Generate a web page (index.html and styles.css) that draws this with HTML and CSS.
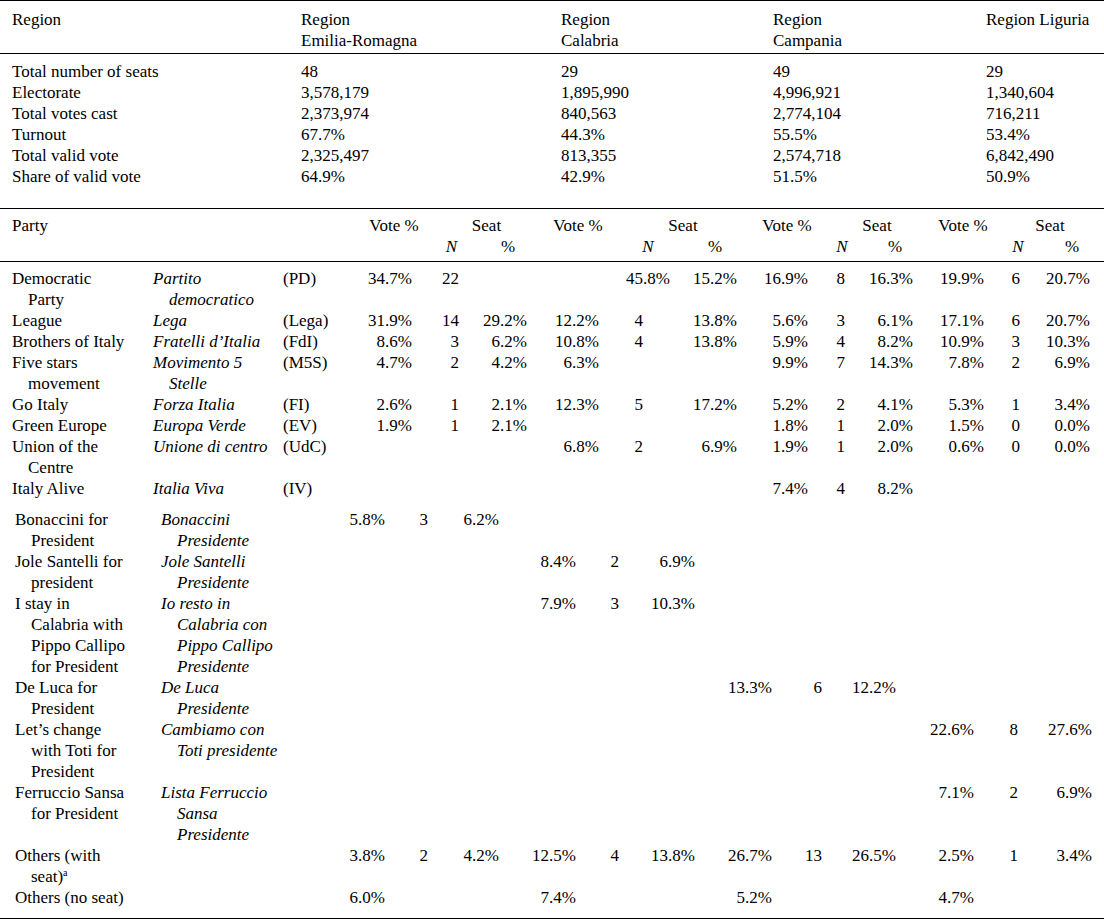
FILE: index.html
```html
<!DOCTYPE html>
<html lang="en">
<head>
  <meta charset="UTF-8">
  <title>Regional elections 2020</title>
  <link rel="stylesheet" href="styles.css">
</head>
<body>

  <table class="summary">
    <colgroup>
      <col style="width: 301px"><col style="width: 260px"><col style="width: 212px"><col style="width: 213px"><col style="width: 118px">
    </colgroup>
    <thead>
      <tr>
        <th>Region</th>
        <th>Region<br>Emilia-Romagna</th>
        <th>Region<br>Calabria</th>
        <th>Region<br>Campania</th>
        <th>Region Liguria</th>
      </tr>
    </thead>
    <tbody>
      <tr><td>Total number of seats</td><td>48</td><td>29</td><td>49</td><td>29</td></tr>
      <tr><td>Electorate</td><td>3,578,179</td><td>1,895,990</td><td>4,996,921</td><td>1,340,604</td></tr>
      <tr><td>Total votes cast</td><td>2,373,974</td><td>840,563</td><td>2,774,104</td><td>716,211</td></tr>
      <tr><td>Turnout</td><td>67.7%</td><td>44.3%</td><td>55.5%</td><td>53.4%</td></tr>
      <tr><td>Total valid vote</td><td>2,325,497</td><td>813,355</td><td>2,574,718</td><td>6,842,490</td></tr>
      <tr><td>Share of valid vote</td><td>64.9%</td><td>42.9%</td><td>51.5%</td><td>50.9%</td></tr>
    </tbody>
  </table>

  <table class="parties">
    <colgroup>
      <col style="width: 153px"><col style="width: 130px"><col style="width: 82px">
      <col style="width: 58px"><col style="width: 47px"><col style="width: 70px">
      <col style="width: 76px"><col style="width: 64px"><col style="width: 70px">
      <col style="width: 74px"><col style="width: 36px"><col style="width: 70px">
      <col style="width: 66px"><col style="width: 44px"><col style="width: 64px">
    </colgroup>
    <thead>
      <tr class="head-top">
        <th>Party</th><th></th><th></th>
        <th class="vote">Vote %</th><th class="seat seat-er" colspan="2">Seat</th>
        <th class="vote">Vote %</th><th class="seat" colspan="2">Seat</th>
        <th class="vote">Vote %</th><th class="seat" colspan="2">Seat</th>
        <th class="vote">Vote %</th><th class="seat" colspan="2">Seat</th>
      </tr>
      <tr class="head-sub">
        <th></th><th></th><th></th>
        <th></th><th class="n n-er"><i>N</i></th><th class="pct pct-er">%</th>
        <th></th><th class="n"><i>N</i></th><th class="pct">%</th>
        <th></th><th class="n"><i>N</i></th><th class="pct">%</th>
        <th></th><th class="n"><i>N</i></th><th class="pct">%</th>
      </tr>
    </thead>
    <tbody>
      <tr>
        <td class="name">Democratic<br>Party</td><td class="name it">Partito<br>democratico</td><td>(PD)</td>
        <td>34.7%</td><td>22</td><td></td>
        <td></td><td class="spill">45.8%</td><td>15.2%</td>
        <td>16.9%</td><td>8</td><td>16.3%</td>
        <td>19.9%</td><td>6</td><td>20.7%</td>
      </tr>
      <tr>
        <td class="name">League</td><td class="name it">Lega</td><td>(Lega)</td>
        <td>31.9%</td><td>14</td><td>29.2%</td>
        <td>12.2%</td><td>4</td><td>13.8%</td>
        <td>5.6%</td><td>3</td><td>6.1%</td>
        <td>17.1%</td><td>6</td><td>20.7%</td>
      </tr>
      <tr>
        <td class="name">Brothers of Italy</td><td class="name it">Fratelli d’Italia</td><td>(FdI)</td>
        <td>8.6%</td><td>3</td><td>6.2%</td>
        <td>10.8%</td><td>4</td><td>13.8%</td>
        <td>5.9%</td><td>4</td><td>8.2%</td>
        <td>10.9%</td><td>3</td><td>10.3%</td>
      </tr>
      <tr>
        <td class="name">Five stars<br>movement</td><td class="name it">Movimento 5<br>Stelle</td><td>(M5S)</td>
        <td>4.7%</td><td>2</td><td>4.2%</td>
        <td>6.3%</td><td></td><td></td>
        <td>9.9%</td><td>7</td><td>14.3%</td>
        <td>7.8%</td><td>2</td><td>6.9%</td>
      </tr>
      <tr>
        <td class="name">Go Italy</td><td class="name it">Forza Italia</td><td>(FI)</td>
        <td>2.6%</td><td>1</td><td>2.1%</td>
        <td>12.3%</td><td>5</td><td>17.2%</td>
        <td>5.2%</td><td>2</td><td>4.1%</td>
        <td>5.3%</td><td>1</td><td>3.4%</td>
      </tr>
      <tr>
        <td class="name">Green Europe</td><td class="name it">Europa Verde</td><td>(EV)</td>
        <td>1.9%</td><td>1</td><td>2.1%</td>
        <td></td><td></td><td></td>
        <td>1.8%</td><td>1</td><td>2.0%</td>
        <td>1.5%</td><td>0</td><td>0.0%</td>
      </tr>
      <tr>
        <td class="name">Union of the<br>Centre</td><td class="name it">Unione di centro</td><td>(UdC)</td>
        <td></td><td></td><td></td>
        <td>6.8%</td><td>2</td><td>6.9%</td>
        <td>1.9%</td><td>1</td><td>2.0%</td>
        <td>0.6%</td><td>0</td><td>0.0%</td>
      </tr>
      <tr>
        <td class="name">Italy Alive</td><td class="name it">Italia Viva</td><td>(IV)</td>
        <td></td><td></td><td></td>
        <td></td><td></td><td></td>
        <td>7.4%</td><td>4</td><td>8.2%</td>
        <td></td><td></td><td></td>
      </tr>
    </tbody>
  </table>

  <table class="lists">
    <colgroup>
      <col style="width: 161px"><col style="width: 139px">
      <col style="width: 95px"><col style="width: 45px"><col style="width: 70px">
      <col style="width: 80px"><col style="width: 40px"><col style="width: 75px">
      <col style="width: 80px"><col style="width: 50px"><col style="width: 75px">
      <col style="width: 75px"><col style="width: 45px"><col style="width: 74px">
    </colgroup>
    <tbody>
      <tr>
        <td class="name">Bonaccini for<br>President</td><td class="name it">Bonaccini<br>Presidente</td>
        <td>5.8%</td><td>3</td><td>6.2%</td>
        <td></td><td></td><td></td>
        <td></td><td></td><td></td>
        <td></td><td></td><td></td>
      </tr>
      <tr>
        <td class="name">Jole Santelli for<br>president</td><td class="name it">Jole Santelli<br>Presidente</td>
        <td></td><td></td><td></td>
        <td>8.4%</td><td>2</td><td>6.9%</td>
        <td></td><td></td><td></td>
        <td></td><td></td><td></td>
      </tr>
      <tr>
        <td class="name">I stay in<br>Calabria with<br>Pippo Callipo<br>for President</td><td class="name it">Io resto in<br>Calabria con<br>Pippo Callipo<br>Presidente</td>
        <td></td><td></td><td></td>
        <td>7.9%</td><td>3</td><td>10.3%</td>
        <td></td><td></td><td></td>
        <td></td><td></td><td></td>
      </tr>
      <tr>
        <td class="name">De Luca for<br>President</td><td class="name it">De Luca<br>Presidente</td>
        <td></td><td></td><td></td>
        <td></td><td></td><td></td>
        <td>13.3%</td><td>6</td><td>12.2%</td>
        <td></td><td></td><td></td>
      </tr>
      <tr>
        <td class="name">Let’s change<br>with Toti for<br>President</td><td class="name it">Cambiamo con<br>Toti presidente</td>
        <td></td><td></td><td></td>
        <td></td><td></td><td></td>
        <td></td><td></td><td></td>
        <td>22.6%</td><td>8</td><td>27.6%</td>
      </tr>
      <tr>
        <td class="name">Ferruccio Sansa<br>for President</td><td class="name it">Lista Ferruccio<br>Sansa<br>Presidente</td>
        <td></td><td></td><td></td>
        <td></td><td></td><td></td>
        <td></td><td></td><td></td>
        <td>7.1%</td><td>2</td><td>6.9%</td>
      </tr>
      <tr>
        <td class="name">Others (with<br>seat)<sup>a</sup></td><td></td>
        <td>3.8%</td><td>2</td><td>4.2%</td>
        <td>12.5%</td><td>4</td><td>13.8%</td>
        <td>26.7%</td><td>13</td><td>26.5%</td>
        <td>2.5%</td><td>1</td><td>3.4%</td>
      </tr>
      <tr>
        <td class="name">Others (no seat)</td><td></td>
        <td>6.0%</td><td></td><td></td>
        <td>7.4%</td><td></td><td></td>
        <td>5.2%</td><td></td><td></td>
        <td>4.7%</td><td></td><td></td>
      </tr>
    </tbody>
  </table>

</body>
</html>
```

FILE: styles.css
```css
body {
  margin: 0;
  background-color: #fff;
  color: #000;
  font-family: "Liberation Serif", "Times New Roman", serif;
  font-size: 17px;
  line-height: 21px;
}
table {
  width: 1104px;
  table-layout: fixed;
  border-collapse: separate;
  border-spacing: 0;
}
th, td {
  padding: 0;
  font-weight: normal;
  text-align: left;
  vertical-align: top;
  white-space: nowrap;
}
.it {
  font-style: italic;
}
.name {
  padding-left: 16px;
  text-indent: -16px;
}
sup {
  font-size: 10px;
  line-height: 0;
  vertical-align: 6px;
}

/* summary block */
.summary th {
  border-top: 1px solid #000;
  border-bottom: 1px solid #000;
  padding: 8px 0 2px;
}
.summary th:first-child,
.summary td:first-child {
  padding-left: 12px;
}
.summary tbody tr:first-child td {
  padding-top: 7px;
}
.summary tbody tr:last-child td {
  padding-bottom: 21px;
}

/* parties block */
.parties .head-top th {
  border-top: 1px solid #000;
  padding-top: 6px;
}
.parties .head-sub th {
  border-bottom: 1px solid #000;
  padding-bottom: 4px;
}
.parties th:first-child,
.parties td:first-child {
  padding-left: 28px;
  text-indent: -16px;
}
.parties .vote,
.parties .seat,
.parties .n,
.parties .pct {
  text-align: center;
}
.parties .seat-er,
.parties .n-er {
  padding-left: 10px;
}
.parties .pct-er {
  padding-left: 6px;
}
.parties tbody tr:first-child td {
  padding-top: 6px;
}
.parties td:nth-child(n+4) {
  text-align: right;
}
.parties td:nth-child(4) { padding-right: 11px; }
.parties td:nth-child(5) { padding-right: 11px; }
.parties td:nth-child(6) { padding-right: 13px; }
.parties td:nth-child(7) { padding-right: 17px; }
.parties td:nth-child(8) { padding-right: 37px; }
.parties td:nth-child(9) { padding-right: 13px; }
.parties td:nth-child(10) { padding-right: 16px; }
.parties td:nth-child(11) { padding-right: 15px; }
.parties td:nth-child(12) { padding-right: 17px; }
.parties td:nth-child(13) { padding-right: 12px; }
.parties td:nth-child(14) { padding-right: 20px; }
.parties td:nth-child(15) { padding-right: 14px; }
.parties td.spill {
  padding-right: 10px;
}

/* candidate lists block */
.lists {
  border-bottom: 1px solid #000;
}
.lists td:first-child {
  padding-left: 31px;
}
.lists tbody tr:first-child td {
  padding-top: 10px;
}
.lists tbody tr:last-child td {
  padding-bottom: 10px;
}
.lists td:nth-child(n+3) {
  text-align: right;
}
.lists td:nth-child(3) { padding-right: 10px; }
.lists td:nth-child(4) { padding-right: 12px; }
.lists td:nth-child(5) { padding-right: 11px; }
.lists td:nth-child(6) { padding-right: 14px; }
.lists td:nth-child(7) { padding-right: 11px; }
.lists td:nth-child(8) { padding-right: 10px; }
.lists td:nth-child(9) { padding-right: 13px; }
.lists td:nth-child(10) { padding-right: 13px; }
.lists td:nth-child(11) { padding-right: 14px; }
.lists td:nth-child(12) { padding-right: 11px; }
.lists td:nth-child(13) { padding-right: 12px; }
.lists td:nth-child(14) { padding-right: 12px; }
```
